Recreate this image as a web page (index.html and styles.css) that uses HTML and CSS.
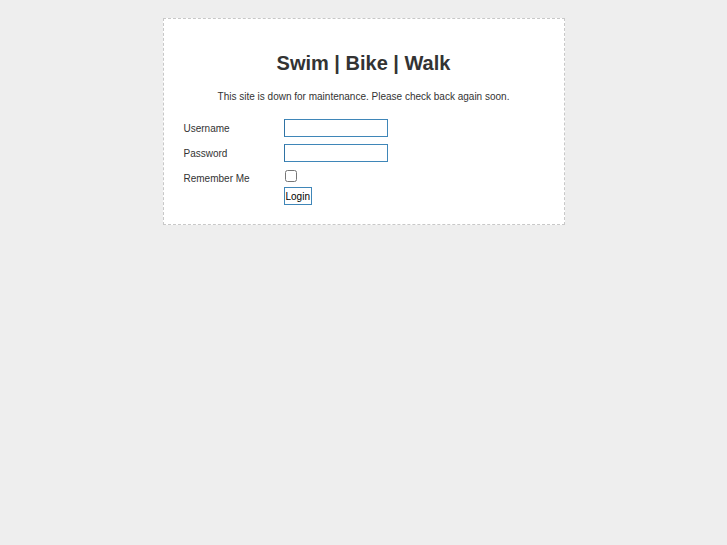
FILE: index.html
```html
<!DOCTYPE html>
<html lang="en">
<head>
    <meta charset="UTF-8">
    <title>Swim | Bike | Walk</title>
    <link rel="stylesheet" href="styles.css">
</head>
<body>
    <div class="maint-box">
        <h1>Swim | Bike | Walk</h1>
        <p class="notice">This site is down for maintenance. Please check back again soon.</p>
        <form class="login-form">
            <label for="username">Username</label>
            <input type="text" id="username" class="field">
            <label for="password">Password</label>
            <input type="password" id="password" class="field">
            <label for="remember" class="check-label">Remember Me</label>
            <input type="checkbox" id="remember" class="check">
            <span></span>
            <button type="button" class="login-btn">Login</button>
        </form>
    </div>
</body>
</html>
```

FILE: styles.css
```css
body {
    margin: 0;
    padding-top: 18px;
    background-color: #eeeeee;
    font-family: "Liberation Sans", Arial, sans-serif;
    color: #333;
}

.maint-box {
    width: 402px;
    margin: 0 auto;
    background-color: #fff;
    border: 1px dashed #c8c8c8;
    padding: 30px 20px 19px 20px;
    box-sizing: border-box;
}

.maint-box h1 {
    margin: 0;
    font-size: 20px;
    text-align: center;
    line-height: 28px;
}

.notice {
    margin: 13px 0 15px;
    font-size: 10px;
    text-align: center;
    line-height: 14px;
}

.login-form {
    display: grid;
    grid-template-columns: 100px auto;
    align-items: center;
    justify-items: start;
    row-gap: 7px;
    font-size: 10px;
}

.check-label {
    align-self: start;
    padding-top: 4px;
    line-height: 12px;
}

.field {
    width: 104px;
    height: 18px;
    box-sizing: border-box;
    border: 1px solid #3f86b8;
    border-left-color: #2f72a3;
    padding: 0 2px;
    margin: 0;
    font-size: 11px;
}

.check {
    width: 12px;
    height: 12px;
    margin: 1px 0 0 1px;
    align-self: start;
}

.login-btn {
    margin-top: -5px;
    height: 18px;
    padding: 0 1px;
    border: 1px solid #3f86b8;
    background: #fff;
    color: #000;
    font-family: "Liberation Sans", Arial, sans-serif;
    font-size: 10px;
}
```
